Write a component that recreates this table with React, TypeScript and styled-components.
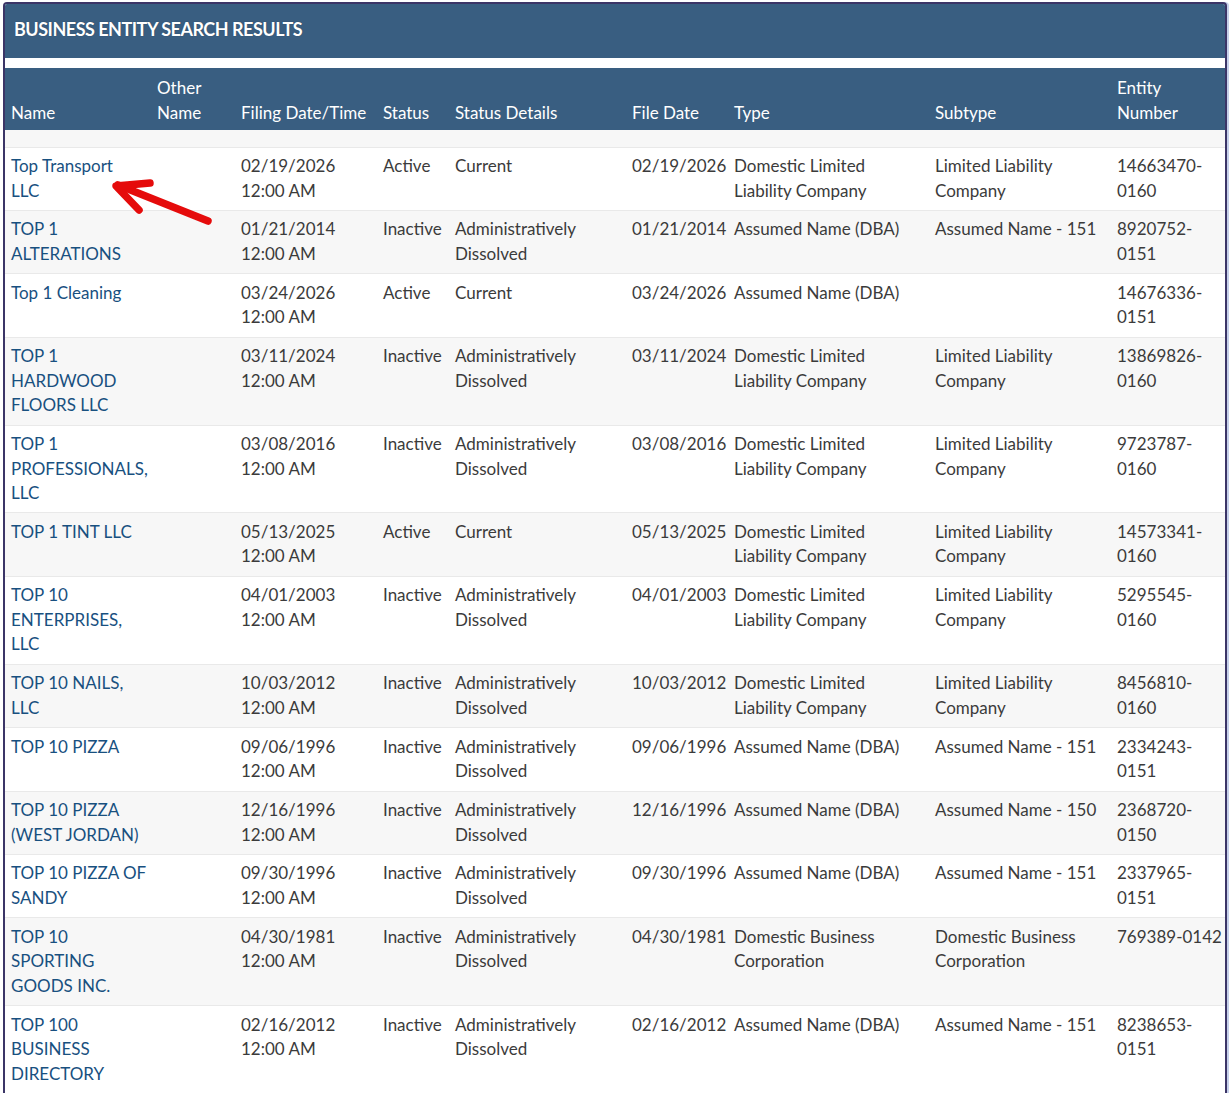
import React from "react";
import styled, { createGlobalStyle } from "styled-components";

const GlobalStyle = createGlobalStyle`
  html, body { margin: 0; padding: 0; background: #ffffff; }
  body { font-family: Lato, "Open Sans", sans-serif; }
`;

const Page = styled.div`
  padding: 2px 0 0 3px;
`;

const Panel = styled.section`
  position: relative;
  width: 1224px;
  box-sizing: border-box;
  border: 2px solid #3b3567;
  border-bottom: none;
  border-radius: 4px 4px 0 0;
  box-shadow: 2px 0 0 #c6d0ea;
  background: #ffffff;
`;

const TitleBar = styled.header`
  height: 54px;
  display: flex;
  align-items: center;
  padding: 0 0 0 9px;
  background: #395e81;
  border-radius: 2px 2px 0 0;
`;

const Title = styled.h1`
  margin: 0 0 4px 0;
  font-family: Lato, sans-serif;
  font-weight: 700;
  font-size: 18px;
  letter-spacing: -0.5px;
  color: #ffffff;
  text-shadow: 0 0 1px rgba(0, 0, 0, 0.35);
`;

const Gap = styled.div`
  height: 10px;
`;

const Table = styled.table`
  width: 1220px;
  border-collapse: collapse;
  table-layout: fixed;
  font-family: Lato, sans-serif;
  font-size: 17px;
  line-height: 24.5px;
`;

const HeadCell = styled.th`
  background: #395e81;
  color: #ffffff;
  font-weight: 400;
  text-align: left;
  vertical-align: bottom;
  padding: 8px 6px 5px 6px;
  height: 49px;
`;

const SpacerRow = styled.tr`
  height: 17px;
  background: #f7f7f7;
`;

const Row = styled.tr<{ $striped: boolean }>`
  background: ${(p) => (p.$striped ? "#f7f7f7" : "#ffffff")};
  border-top: 1px solid #e9e9e9;
`;

const Cell = styled.td`
  padding: 6.5px 6px 6.9px 6px;
  vertical-align: top;
  color: #3b3b3b;
  white-space: nowrap;
`;

const NameLink = styled.a`
  color: #18507f;
  text-decoration: none;
`;

const Arrow = styled.svg`
  position: absolute;
  left: 95px;
  top: 166px;
  width: 120px;
  height: 65px;
  overflow: visible;
  pointer-events: none;
`;

type RowData = {
  name: string[];
  filing: string;
  status: string;
  details: string[];
  fileDate: string;
  type: string[];
  subtype: string[];
  number: string[];
};

const AD = ["Administratively", "Dissolved"];
const DLLC = ["Domestic Limited", "Liability Company"];
const LLC = ["Limited Liability", "Company"];
const DBA = ["Assumed Name (DBA)"];

const rows: RowData[] = [
  { name: ["Top Transport", "LLC"], filing: "02/19/2026", status: "Active", details: ["Current"], fileDate: "02/19/2026", type: DLLC, subtype: LLC, number: ["14663470-", "0160"] },
  { name: ["TOP 1", "ALTERATIONS"], filing: "01/21/2014", status: "Inactive", details: AD, fileDate: "01/21/2014", type: DBA, subtype: ["Assumed Name - 151"], number: ["8920752-", "0151"] },
  { name: ["Top 1 Cleaning"], filing: "03/24/2026", status: "Active", details: ["Current"], fileDate: "03/24/2026", type: DBA, subtype: [], number: ["14676336-", "0151"] },
  { name: ["TOP 1", "HARDWOOD", "FLOORS LLC"], filing: "03/11/2024", status: "Inactive", details: AD, fileDate: "03/11/2024", type: DLLC, subtype: LLC, number: ["13869826-", "0160"] },
  { name: ["TOP 1", "PROFESSIONALS,", "LLC"], filing: "03/08/2016", status: "Inactive", details: AD, fileDate: "03/08/2016", type: DLLC, subtype: LLC, number: ["9723787-", "0160"] },
  { name: ["TOP 1 TINT LLC"], filing: "05/13/2025", status: "Active", details: ["Current"], fileDate: "05/13/2025", type: DLLC, subtype: LLC, number: ["14573341-", "0160"] },
  { name: ["TOP 10", "ENTERPRISES,", "LLC"], filing: "04/01/2003", status: "Inactive", details: AD, fileDate: "04/01/2003", type: DLLC, subtype: LLC, number: ["5295545-", "0160"] },
  { name: ["TOP 10 NAILS,", "LLC"], filing: "10/03/2012", status: "Inactive", details: AD, fileDate: "10/03/2012", type: DLLC, subtype: LLC, number: ["8456810-", "0160"] },
  { name: ["TOP 10 PIZZA"], filing: "09/06/1996", status: "Inactive", details: AD, fileDate: "09/06/1996", type: DBA, subtype: ["Assumed Name - 151"], number: ["2334243-", "0151"] },
  { name: ["TOP 10 PIZZA", "(WEST JORDAN)"], filing: "12/16/1996", status: "Inactive", details: AD, fileDate: "12/16/1996", type: DBA, subtype: ["Assumed Name - 150"], number: ["2368720-", "0150"] },
  { name: ["TOP 10 PIZZA OF", "SANDY"], filing: "09/30/1996", status: "Inactive", details: AD, fileDate: "09/30/1996", type: DBA, subtype: ["Assumed Name - 151"], number: ["2337965-", "0151"] },
  { name: ["TOP 10", "SPORTING", "GOODS INC."], filing: "04/30/1981", status: "Inactive", details: AD, fileDate: "04/30/1981", type: ["Domestic Business", "Corporation"], subtype: ["Domestic Business", "Corporation"], number: ["769389-0142"] },
  { name: ["TOP 100", "BUSINESS", "DIRECTORY"], filing: "02/16/2012", status: "Inactive", details: AD, fileDate: "02/16/2012", type: DBA, subtype: ["Assumed Name - 151"], number: ["8238653-", "0151"] },
];

const widths = [146, 84, 142, 72, 177, 102, 201, 182, 114];

const Lines = ({ lines }: { lines: string[] }) => (
  <>
    {lines.map((l, i) => (
      <React.Fragment key={i}>
        {i > 0 && <br />}
        {l}
      </React.Fragment>
    ))}
  </>
);

export default function App() {
  return (
    <Page>
      <GlobalStyle />
      <Panel>
        <TitleBar>
          <Title>BUSINESS ENTITY SEARCH RESULTS</Title>
        </TitleBar>
        <Gap />
        <Table>
          <colgroup>
            {widths.map((w, i) => (
              <col key={i} style={{ width: w }} />
            ))}
          </colgroup>
          <thead>
            <tr>
              <HeadCell>Name</HeadCell>
              <HeadCell>
                Other
                <br />
                Name
              </HeadCell>
              <HeadCell>Filing Date/Time</HeadCell>
              <HeadCell>Status</HeadCell>
              <HeadCell>Status Details</HeadCell>
              <HeadCell>File Date</HeadCell>
              <HeadCell>Type</HeadCell>
              <HeadCell>Subtype</HeadCell>
              <HeadCell>
                Entity
                <br />
                Number
              </HeadCell>
            </tr>
          </thead>
          <tbody>
            <SpacerRow>
              <td colSpan={9} />
            </SpacerRow>
            {rows.map((r, i) => (
              <Row key={i} $striped={i % 2 === 1}>
                <Cell>
                  <NameLink href="#">
                    <Lines lines={r.name} />
                  </NameLink>
                </Cell>
                <Cell />
                <Cell>
                  {r.filing}
                  <br />
                  12:00 AM
                </Cell>
                <Cell>{r.status}</Cell>
                <Cell>
                  <Lines lines={r.details} />
                </Cell>
                <Cell>{r.fileDate}</Cell>
                <Cell>
                  <Lines lines={r.type} />
                </Cell>
                <Cell>
                  <Lines lines={r.subtype} />
                </Cell>
                <Cell>
                  <Lines lines={r.number} />
                </Cell>
              </Row>
            ))}
          </tbody>
        </Table>
        <Arrow viewBox="0 0 120 65">
          <g stroke="#e50b0b" strokeWidth="7.5" strokeLinecap="round" strokeLinejoin="round" fill="none">
            <path d="M108 51 L18 15" />
            <path d="M50 13 L16 16 L39 40" />
          </g>
        </Arrow>
      </Panel>
    </Page>
  );
}
